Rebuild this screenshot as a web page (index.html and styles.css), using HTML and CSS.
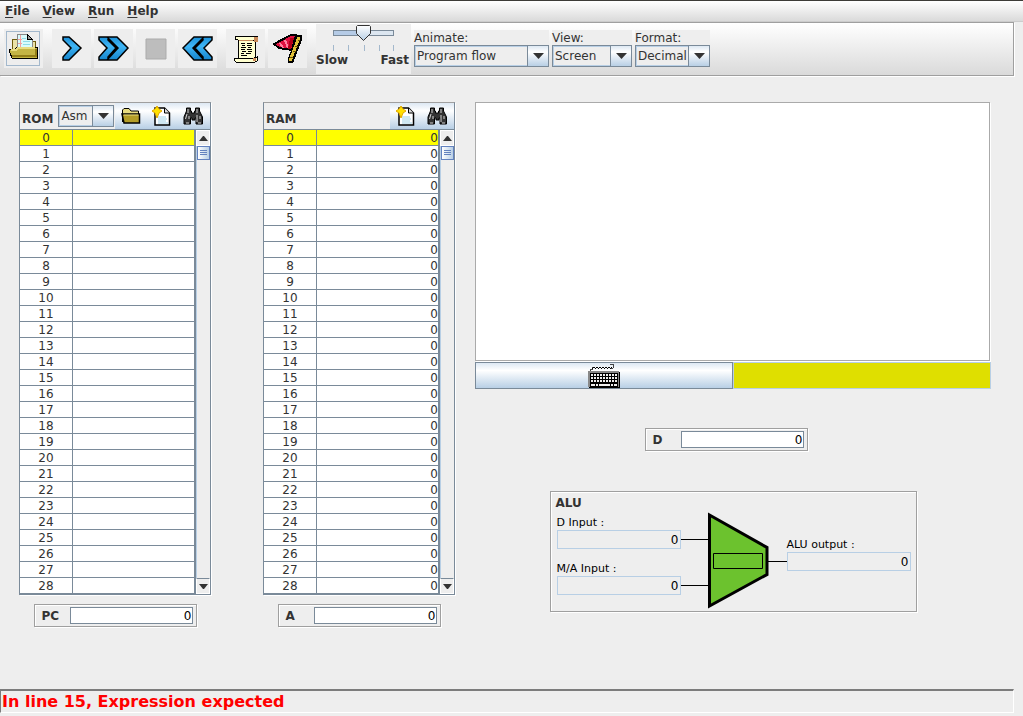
FILE: index.html
```html
<!DOCTYPE html>
<html lang="en">
<head>
<meta charset="utf-8">
<title>CPU Emulator</title>
<link rel="stylesheet" href="styles.css">
</head>
<body>
<nav class="menubar">
  <button class="menu"><u>F</u>ile</button>
  <button class="menu"><u>V</u>iew</button>
  <button class="menu"><u>R</u>un</button>
  <button class="menu"><u>H</u>elp</button>
</nav>

<header class="toolbar">
  <div class="tools">
    <button class="tool tool-focus" aria-label="Load program">
      <svg width="30" height="30" viewBox="0 0 30 30" shape-rendering="crispEdges">
        <path d="M4 8h7l2 2h14v15H4z" fill="#e9e2a8" stroke="#6d5c0c"/>
        <path d="M9 3h10l5 5v10H9z" fill="#d9fbfb" stroke="#888"/>
        <path d="M19 3v5h5z" fill="#999" stroke="#000"/>
        <path d="M12 4v13M10 8h4M10 12h4" stroke="#f2a0a0" fill="none"/>
        <path d="M14 7h4M15 10h7M15 13h7" stroke="#8fdce8" fill="none"/>
        <path d="M1 18h6l2-2h20v11H4l-2-5z" fill="#c4b545" stroke="#000"/>
        <path d="M3 19h5l2-2h17" stroke="#e8dc80" stroke-width="2" fill="none"/>
        <path d="M4 25h24V18" stroke="#94801a" stroke-width="2" fill="none"/>
      </svg>
    </button>
  </div>
  <div class="tools">
    <button class="tool" aria-label="Single step">
      <svg width="32" height="30" viewBox="0 0 32 30"><path d="M7 3h6l12 11-12 12H7v-3l8-9-8-8z" fill="url(#blue)" stroke="#000" stroke-width="1.500"/></svg>
    </button>
    <button class="tool" aria-label="Run">
      <svg width="34" height="30" viewBox="0 0 34 30"><path d="M2 3h8l11 11-11 12H2v-3l8-9-8-8zM11 3h9l11 11-11 12h-9v-3l8-9-8-8z" fill="url(#blue)" stroke="#000" stroke-width="1.500"/></svg>
    </button>
    <button class="tool" aria-label="Stop" disabled>
      <svg width="22" height="22" viewBox="0 0 22 22"><path d="M1 1h20v20H1z" fill="#bdbdbd" stroke="#ababab"/></svg>
    </button>
    <button class="tool" aria-label="Reset">
      <svg width="34" height="30" viewBox="0 0 34 30"><path d="M31 3h-8L12 14l11 12h8v-3l-8-9 8-8zM22 3h-9L2 14l11 12h9v-3l-8-9 8-8z" fill="url(#blue)" stroke="#000" stroke-width="1.500"/></svg>
    </button>
  </div>
  <div class="tools">
    <button class="tool" aria-label="Load script">
      <svg width="26" height="28" viewBox="0 0 26 28" shape-rendering="crispEdges">
        <path d="M5 5h17v18H5z" fill="#ffffcf" stroke="#000"/>
        <path d="M3 1h21v4H5L2 4V2z" fill="#ffffcf" stroke="#000"/>
        <path d="M6 5h14M21 2h3v4h-3z" fill="#c98a5a" stroke="#c98a5a"/>
        <path d="M2 23h19l3-1v4l-2 1H3l-2-2z" fill="#ffffcf" stroke="#000"/>
        <path d="M20 23h3v3h-3z" fill="#c98a5a"/>
        <path d="M7.500 8.500h4m2 0h5M8.500 10.500h3m2 0h5M7.500 12.500h5m2 0h3M7.500 14.500h4m2 0h5M8.500 16.500h4m2 0h4M7.500 18.500h3m2 0h5M7.500 20.500h6" stroke="#000" fill="none"/>
      </svg>
    </button>
    <button class="tool" aria-label="Breakpoints">
      <svg width="32" height="32" viewBox="0 0 32 32" shape-rendering="crispEdges">
        <path d="M2 11L19 2h5l-4 15-13-2z" fill="#e01040" stroke="#000" stroke-width="2"/>
        <path d="M8 10l3 5M13 7l3 8" stroke="#ff7fa0" stroke-width="2"/>
        <path d="M18 5h4l-3 11h-3z" fill="#b00018"/>
        <path d="M25 2h5v5l-9 23h-5v-5z" fill="#000"/>
        <path d="M27 4l-9 24" stroke="#e2c238" stroke-width="3" fill="none"/>
        <path d="M26 7l2 1M23 13l3 1M21 18l3 1M18 24l3 1" stroke="#6b5200"/>
      </svg>
    </button>
  </div>
  <div class="speed">
    <input class="range" type="range" min="0" max="4" value="2" aria-label="Speed">
    <svg class="ticks" width="61" height="6" viewBox="0 0 61 6" shape-rendering="crispEdges"><path d="M.5 0v6M15.500 0v6M31.500 0v6M46.500 0v6M60.500 0v6" stroke="#a3b8cc"/></svg>
    <div class="speed-names"><span>Slow</span><span>Fast</span></div>
  </div>
  <div class="choices">
    <div class="choice choice-long">
      <label for="animate">Animate:</label>
      <span class="combo"><select id="animate"><option>Program flow</option></select><svg class="arrow" width="11" height="6" viewBox="0 0 11 6"><path d="M0 0h11L5.500 6z"/></svg></span>
    </div>
    <div class="choice choice-mid">
      <label for="view">View:</label>
      <span class="combo"><select id="view"><option>Screen</option></select><svg class="arrow" width="11" height="6" viewBox="0 0 11 6"><path d="M0 0h11L5.500 6z"/></svg></span>
    </div>
    <div class="choice choice-short">
      <label for="format">Format:</label>
      <span class="combo"><select id="format"><option>Decimal</option></select><svg class="arrow" width="11" height="6" viewBox="0 0 11 6"><path d="M0 0h11L5.500 6z"/></svg></span>
    </div>
  </div>
</header>

<main class="machine">
  <section class="column">
    <div class="memory">
      <div class="memory-head">
        <label class="memory-name" for="rom-format">ROM</label>
        <span class="combo combo-rom"><select id="rom-format"><option>Asm</option></select><svg class="arrow" width="11" height="6" viewBox="0 0 11 6"><path d="M0 0h11L5.500 6z"/></svg></span>
        <span class="memory-tools">
          <button class="mini" aria-label="Open ROM file">
            <svg width="22" height="20" viewBox="0 0 22 20"><path d="M2.500 16V4L4 2.500h5L11 5h7.500v3" fill="#e8dc80" stroke="#000"/><path d="M2 8h17.500v9H4z" fill="#b39d27" stroke="#000" stroke-width="1.500"/><path d="M3.500 9h15" stroke="#e8dc80"/></svg>
          </button>
          <button class="mini" aria-label="Clear ROM"><svg width="20" height="22"><use href="#new"/></svg></button>
          <button class="mini" aria-label="Search ROM"><svg width="20" height="20"><use href="#find"/></svg></button>
        </span>
      </div>
      <div class="memory-body">
        <table class="cells" aria-label="ROM"><tbody data-value=""></tbody></table>
        <div class="scroll">
          <button class="scroll-end" aria-label="Scroll up"><svg width="9" height="5" viewBox="0 0 9 5"><path d="M0 5h9L5 0H4z"/></svg></button>
          <div class="scroll-track"><div class="thumb"></div></div>
          <button class="scroll-end" aria-label="Scroll down"><svg width="9" height="5" viewBox="0 0 9 5"><path d="M0 0h9L5 5H4z"/></svg></button>
        </div>
      </div>
    </div>
    <div class="register"><label for="pc">PC</label><input id="pc" value="0"></div>
  </section>

  <section class="column">
    <div class="memory">
      <div class="memory-head">
        <span class="memory-name">RAM</span>
        <span class="memory-tools">
          <button class="mini" aria-label="Clear RAM"><svg width="20" height="22"><use href="#new"/></svg></button>
          <button class="mini" aria-label="Search RAM"><svg width="20" height="20"><use href="#find"/></svg></button>
        </span>
      </div>
      <div class="memory-body">
        <table class="cells" aria-label="RAM"><tbody data-value="0"></tbody></table>
        <div class="scroll">
          <button class="scroll-end" aria-label="Scroll up"><svg width="9" height="5" viewBox="0 0 9 5"><path d="M0 5h9L5 0H4z"/></svg></button>
          <div class="scroll-track"><div class="thumb"></div></div>
          <button class="scroll-end" aria-label="Scroll down"><svg width="9" height="5" viewBox="0 0 9 5"><path d="M0 0h9L5 5H4z"/></svg></button>
        </div>
      </div>
    </div>
    <div class="register"><label for="a">A</label><input id="a" value="0"></div>
  </section>

  <section class="devices">
    <div class="screen"></div>
    <div class="keyboard">
      <button class="keys" aria-label="Keyboard">
        <svg width="32" height="24" viewBox="0 0 32 24" shape-rendering="crispEdges">
          <path d="M2 7V5h2V3h1M22 .5h3v3M23 4h2" stroke="#444" fill="none"/>
          <path d="M5 3.500h19" stroke="#000" stroke-dasharray="2 1"/>
          <path d="M4 4.500h19" stroke="#000" stroke-dasharray="1 2"/>
          <path d="M1 8h31v16H1z" fill="#000"/>
          <path d="M0 7h31v16H0z" fill="#888"/>
          <path d="M2 9h28v14H2z" fill="#000"/>
          <path d="M3 11h26M3 14h26M3 17h26" stroke="#eee" stroke-width="2" stroke-dasharray="2 1"/>
          <path d="M3 20.500h4m1 0h2m1 0h11m1 0h2m1 0h3" stroke="#eee" stroke-width="2"/>
        </svg>
      </button>
      <div class="typed"></div>
    </div>
    <div class="register register-d"><label for="d">D</label><input id="d" value="0"></div>

    <div class="alu">
      <h2>ALU</h2>
      <div class="alu-grid">
        <div class="inputs">
          <label for="din">D Input :</label><input id="din" value="0" readonly>
          <label class="second" for="main-in">M/A Input :</label><input id="main-in" value="0" readonly>
        </div>
        <svg class="alu-shape" width="106" height="97" viewBox="0 0 106 97">
          <path d="M0 27.500h28M0 73.500h28M86 49.500h20" stroke="#000"/>
          <path d="M28.500 3L86 35.500v27L28.500 94z" fill="#6cc22e" stroke="#000" stroke-width="3"/>
          <path d="M32.500 41.500h49v15h-49z" fill="none" stroke="#000"/>
        </svg>
        <div class="output"><label for="out">ALU output :</label><input id="out" value="0" readonly></div>
      </div>
    </div>
  </section>
</main>

<footer class="status" role="status">In line 15, Expression expected</footer>

<svg class="defs" width="0" height="0" aria-hidden="true">
  <defs>
    <linearGradient id="blue" x1="0" y1="0" x2="0" y2="1"><stop offset="0" stop-color="#1c90d8"/><stop offset=".4" stop-color="#3fb5f5"/><stop offset="1" stop-color="#1484cc"/></linearGradient>
    <symbol id="new" viewBox="0 0 20 22"><path d="M3 3h9.500l5 5v12H3z" fill="#fff" stroke="#000" stroke-width="1.500"/><path d="M12.500 3v5h5" fill="#ddd" stroke="#000"/><path d="M6 12h8M6 14h9M6 16h8M6 18h10" stroke="#9fd0e4"/><path d="M5 1l2 3 3 2-3 2-2 5-2-5-3-2 3-2z" fill="#ffe000" stroke="#e0a800"/></symbol>
    <symbol id="find" viewBox="0 0 20 20"><path d="M3.500 2h4v3h1v2h3V5h1V2h4v3l3 6v7h-6.500v-6h-1v2H9v-2H7.500v6H1v-7l2.500-6z" fill="#333" stroke="#000"/><path d="M5 3v4M14 3v4M4 8l-1.500 5M14 9v7M3 17h3M15 17h3M6 10v3M17 10v3" stroke="#d5d5d5"/></symbol>
  </defs>
</svg>
<script src="app.js"></script>
</body>
</html>
```
FILE: styles.css
```css
* { box-sizing: border-box; }

body {
  margin: 0;
  min-height: 100vh;
  display: flex;
  flex-direction: column;
  background: #eee;
  color: #333;
  font: 12px/16px "DejaVu Sans", sans-serif;
}

button, input, select {
  margin: 0;
  padding: 0;
  border: 0;
  border-radius: 0;
  background: none;
  color: inherit;
  font: inherit;
}

svg { display: block; }
.defs { position: absolute; }

.menubar {
  display: flex;
  gap: 13px;
  height: 22px;
  padding-left: 5px;
  border-top: 1px solid #3c3b37;
  border-bottom: 1px solid #ccc;
  background: linear-gradient(#fff, #dadada);
}
.menu { font-weight: bold; }
.menu u { text-underline-offset: 2px; }

.toolbar {
  display: flex;
  gap: 9px;
  height: 54px;
  margin-right: 9px;
  padding: 1px 0 1px 4px;
  border: 1px solid #9f9f9f;
  border-left: 0;
  background: linear-gradient(#fff, #dadada);
  box-shadow: 1px 1px #fff;
}
.tools { display: flex; gap: 3px; padding-top: 5px; }
.tool {
  display: grid;
  place-items: center;
  width: 39px;
  height: 39px;
  background: #eee;
}
.tool-focus { position: relative; padding: 0 2px 5px 0; }
.tool-focus::after {
  content: "";
  position: absolute;
  inset: 2px 3px 2px 2px;
  border: 1px solid #a3b8cc;
}

.speed {
  display: flex;
  flex-direction: column;
  align-items: center;
  width: 95px;
  height: 50px;
  background: #eee;
  font-weight: bold;
}
.range {
  appearance: none;
  width: 61px;
  height: 17px;
}
.range::-webkit-slider-runnable-track {
  height: 6px;
  border: 1px solid #7a8a99;
  background: linear-gradient(90deg, #b5cbe6 50%, #dce6f0 50%);
}
.range::-webkit-slider-thumb {
  appearance: none;
  width: 15px;
  height: 16px;
  margin-top: -6px;
  background: url("data:image/svg+xml,%3Csvg xmlns='http://www.w3.org/2000/svg' width='15' height='16'%3E%3ClinearGradient id='g' x2='0' y2='1'%3E%3Cstop stop-color='%23fff'/%3E%3Cstop offset='1' stop-color='%23b8cfe5'/%3E%3C/linearGradient%3E%3Cpath d='M1.500 .5h12l1 1v7l-7 7-7-7v-7z' fill='url(%23g)' stroke='%23333'/%3E%3C/svg%3E");
}
.ticks { margin-top: 4px; }
.speed-names {
  display: flex;
  justify-content: space-between;
  width: 100%;
  padding: 1px 2px 0 0;
}

.choices { display: flex; gap: 3px; margin-left: -6px; padding-top: 6px; }
.choice { height: 37px; background: #eee; }
.choice label { display: block; height: 15px; }
.choice-long { width: 135px; }
.choice-mid { width: 80px; }
.choice-short { width: 75px; }

.combo { position: relative; display: block; height: 22px; }
.combo select {
  appearance: none;
  width: 100%;
  height: 100%;
  padding-left: 2px;
  border: 1px solid #7a8a99;
  box-shadow: inset 0 0 0 1px #b8cfe5;
  background: #eee;
}
.combo::after {
  content: "";
  position: absolute;
  inset: 0 0 0 auto;
  width: 20px;
  border: 1px solid #7a8a99;
  background: linear-gradient(#dde8f3, #fff 30%, #b8cfe5);
  pointer-events: none;
}
.arrow {
  position: absolute;
  z-index: 1;
  right: 5px;
  top: 8px;
  fill: #333;
  pointer-events: none;
}

.machine {
  flex: 1;
  display: grid;
  grid-template-columns: 192px 192px minmax(0, 1fr);
  column-gap: 52px;
  padding: 26px 32px 20px 19px;
}
.column { display: flex; flex-direction: column; align-items: center; gap: 9px; }

.memory {
  width: 100%;
  border: 1px solid #7a8a99;
  border-top-color: #9f9f9f;
  box-shadow: 1px 1px #fff;
}
.memory-head {
  display: flex;
  align-items: center;
  height: 27px;
  border-bottom: 1px solid #7a8a99;
}
.memory-name {
  padding: 5px 0 0 2px;
  font-weight: bold;
}
.combo-rom { width: 56px; margin-left: 5px; }
.memory-tools {
  display: flex;
  height: 100%;
  margin-left: auto;
  padding-right: 2px;
  background: linear-gradient(#dde8f3, #fff 30%, #b8cfe5);
}
.mini { display: grid; place-items: center; width: 31px; }

.memory-body { display: flex; }
.cells {
  flex: 1;
  border-spacing: 0;
  border-right: 1px solid #7a8a99;
  background: #fff;
}
.cells td {
  height: 16px;
  padding: 1px 0 0;
  border-right: 1px solid #7a8a99;
  border-bottom: 1px solid #7a8a99;
  line-height: 14px;
  text-align: right;
}
.cells td:first-child { width: 53px; text-align: center; }
.cells tr:first-child { background: #ff0; }

.scroll {
  display: flex;
  flex-direction: column;
  width: 14px;
}
.scroll-end {
  display: grid;
  place-items: center;
  height: 16px;
  border: 1px solid #fff;
  fill: #333;
}
.scroll-end:last-child { border-top-color: #7a8a99; }
.scroll-track { flex: 1; border-left: 1px solid #b8cfe5; }
.thumb {
  height: 14px;
  padding: 3px 2px 4px;
  border: 1px solid #6382bf;
  background:
    repeating-linear-gradient(#6382bf 0 1px, transparent 1px 2px) content-box,
    linear-gradient(90deg, #fff, #b8cfe5);
}

.register {
  display: flex;
  align-items: center;
  justify-content: space-between;
  width: 163px;
  height: 23px;
  padding: 0 3px 0 7px;
  border: 1px solid #9f9f9f;
  box-shadow: 1px 1px #fff, inset 1px 1px #fff;
  font-weight: bold;
}
.register input {
  width: 123px;
  height: 17px;
  padding: 1px 0 0;
  border: 1px solid #7a8a99;
  background: #fff;
  color: #000;
  text-align: right;
  font-weight: normal;
}

.devices {
  display: flex;
  flex-direction: column;
  align-items: center;
  margin-left: -32px;
}
.screen {
  align-self: stretch;
  height: 259px;
  margin-right: 1px;
  border: 1px solid #aaa;
  background: #fff;
  box-shadow: 1px 1px #fff;
}
.keyboard {
  display: grid;
  grid-template-columns: 1fr 1fr;
  width: 100%;
  height: 27px;
  margin-top: 1px;
}
.keys {
  display: grid;
  place-items: center;
  border: 1px solid #7a8a99;
  background: linear-gradient(#dde8f3, #fff 30%, #b8cfe5);
}
.typed { border: 1px solid #b8cfe5; background: #dfdf00; }
.register-d { margin: 39px 14px 0 0; }

.alu {
  width: 367px;
  height: 121px;
  margin-top: 40px;
  padding: 0 5px;
  border: 1px solid #9f9f9f;
  box-shadow: 1px 1px #fff, inset 1px 1px #fff;
  color: #000;
}
.alu h2 {
  height: 20px;
  margin: 0;
  color: #333;
  font: bold 12px/22px "DejaVu Sans", sans-serif;
}
.alu-grid { display: grid; grid-template-columns: 124px 106px 124px; padding-left: 1px; }
.alu label { display: block; font-size: 11px; line-height: 15px; }
.alu input {
  display: block;
  width: 124px;
  height: 19px;
  padding-right: 1px;
  border: 1px solid #b8cfe5;
  text-align: right;
}
.inputs { padding-top: 3px; }
.inputs .second { margin-top: 12px; }
.output { padding-top: 25px; }

.status {
  height: 24px;
  margin: 0 9px 3px 0;
  padding-left: 1px;
  border: 1px solid #fff;
  border-top: 2px solid #7c7c7c;
  border-left-color: #7c7c7c;
  color: #f00;
  font-size: 16px;
  font-weight: bold;
  line-height: 21px;
}
```
FILE: app.js
```js
const VISIBLE_ROWS = 29;

document.querySelectorAll(".cells tbody").forEach((body) => {
  for (let address = 0; address < VISIBLE_ROWS; address += 1) {
    const row = body.insertRow();
    row.insertCell().textContent = address;
    row.insertCell().textContent = body.dataset.value;
  }
});
```
